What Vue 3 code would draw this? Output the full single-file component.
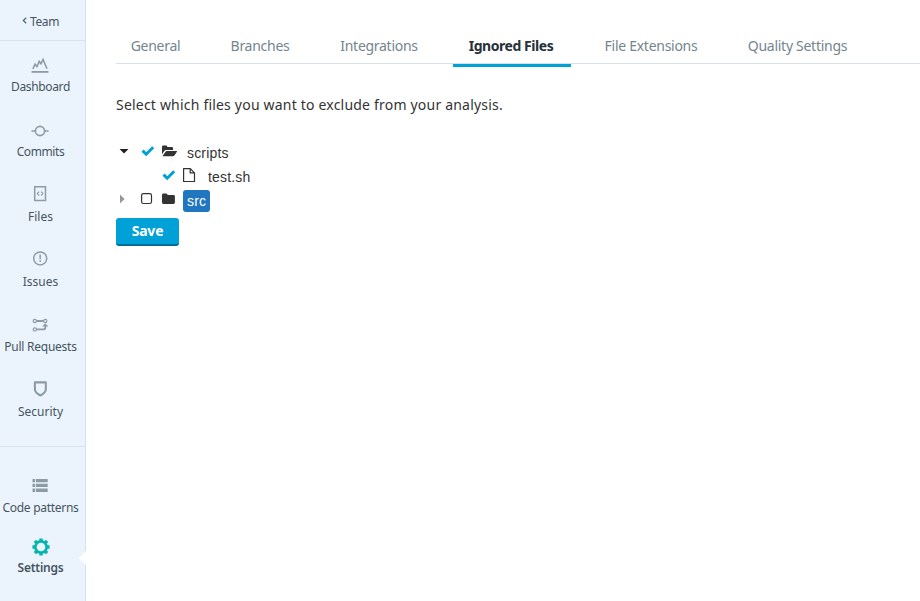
<script setup>
const mainNav = [
  { id: 'dashboard', label: 'Dashboard' },
  { id: 'commits', label: 'Commits' },
  { id: 'files', label: 'Files' },
  { id: 'issues', label: 'Issues' },
  { id: 'pulls', label: 'Pull Requests' },
  { id: 'security', label: 'Security' },
]
const tabs = ['General', 'Branches', 'Integrations', 'Ignored Files', 'File Extensions', 'Quality Settings']
</script>

<template>
  <div class="app">
    <aside class="sidebar">
      <a class="team">
        <svg width="5" height="7" viewBox="0 0 5 7"><path d="M4.2 .7 1.3 3.5 4.2 6.3" fill="none" stroke="#53646f" stroke-width="1.2" /></svg>
        <span>Team</span>
      </a>
      <nav class="main-nav">
        <a v-for="item in mainNav" :key="item.id" class="nav-item" :class="item.id">
          <svg width="20" height="20" viewBox="0 0 20 20" fill="none" stroke="#8d9ba5">
            <g v-if="item.id === 'dashboard'">
              <path d="M1.5 16.9h17" stroke-width="1.8" />
              <path d="M2.9 13.8 5 9.2 7 11.6 9.2 6.4 11 8.8 13 4.4 17 13.8" stroke-width="1.6" />
            </g>
            <g v-else-if="item.id === 'commits'" stroke-width="1.6">
              <circle cx="10" cy="11" r="4.6" /><path d="M1.5 11h4M14.6 11h4" />
            </g>
            <g v-else-if="item.id === 'files'">
              <path d="M4.7 1.7h10.8v13.7H4.7z" stroke-width="1.5" />
              <path d="m9.2 6.6-2 2 2 2M11 6.6l2 2-2 2" stroke-width="1.1" />
            </g>
            <g v-else-if="item.id === 'issues'">
              <circle cx="10.2" cy="8.4" r="6.5" stroke-width="1.5" />
              <path d="M10.2 4.5v4.8M10.2 10.3v1.6" stroke-width="1.5" />
            </g>
            <g v-else-if="item.id === 'pulls'">
              <circle cx="4.8" cy="6" r="1.6" stroke-width="1.2" /><circle cx="15.3" cy="6" r="1.6" stroke-width="1.2" /><circle cx="4.8" cy="14.4" r="1.6" stroke-width="1.2" />
              <path d="M6.5 6h7.2M6.5 14.4h6.8q2 0 2-2v-2" stroke-width="1.8" />
              <path d="m12.2 11.4 3.1-3.2 3.1 3.2z" fill="#8d9ba5" stroke="none" />
            </g>
            <path v-else d="M4.9 2.4h10.9v7q0 3-5.4 6.1-5.5-3.1-5.5-6.1z" stroke-width="2.1" stroke-linejoin="round" />
          </svg>
          <span>{{ item.label }}</span>
        </a>
      </nav>
      <nav class="bottom-nav">
        <a class="nav-item patterns">
          <svg width="20" height="20" viewBox="0 0 20 20" fill="#8d9ba5">
            <path d="M2.5 4h2.6v3.3H2.5zM5.9 4h11.8v3.3H5.9zM2.5 8.8h2.6v3.3H2.5zM5.9 8.8h11.8v3.3H5.9zM2.5 13.6h2.6v3.3H2.5zM5.9 13.6h11.8v3.3H5.9z" />
          </svg>
          <span>Code patterns</span>
        </a>
        <a class="nav-item settings">
          <svg width="20" height="20" viewBox="0 0 20 20" fill="none" stroke="#05b5ae">
            <circle cx="11" cy="10" r="5.6" stroke-width="2.6" />
            <path d="M11 1.4v2.8M11 15.8v2.8M2.4 10h2.8M16.8 10h2.8M4.9 3.9 7 6M15 14l2.1 2.1M17.1 3.9 15 6M7 14l-2.1 2.1" stroke-width="3.4" />
          </svg>
          <span>Settings</span>
          <i class="notch"></i>
        </a>
      </nav>
    </aside>

    <main class="content">
      <nav class="tabs">
        <a v-for="tab in tabs" :key="tab" class="tab" :class="{ active: tab === 'Ignored Files' }">{{ tab }}</a>
      </nav>
      <p class="intro">Select which files you want to exclude from your analysis.</p>

      <div class="tree">
        <div class="row">
          <svg class="caret" width="16" height="24" viewBox="0 0 16 24"><path d="M3.6 9.9h8.9L8 14.4z" fill="#222" /></svg>
          <svg class="mark" width="16" height="24" viewBox="0 0 16 24"><path d="m2.5 11.7 3.7 3.5 7-6.9" fill="none" stroke="#00a1d6" stroke-width="3" /></svg>
          <svg class="icon" width="18" height="24" viewBox="0 0 18 24">
            <path d="M2 15.3V7.7q0-1.2 1.2-1.2h2.9q1.2 0 1.2 1.2v.4h4.6q1.2 0 1.2 1.2V11H6.1q-1.1 0-1.8.9zM2.4 17.2l3-4.3q.5-.9 1.6-.9h9.6q.8 0 .3.8l-2.5 3.6q-.5.8-1.6.8z" fill="#333" />
          </svg>
          <span class="name">scripts</span>
        </div>
        <div class="row child">
          <svg class="mark" width="16" height="24" viewBox="0 0 16 24"><path d="m2.5 11.7 3.7 3.5 7-6.9" fill="none" stroke="#00a1d6" stroke-width="3" /></svg>
          <svg class="icon" width="18" height="24" viewBox="0 0 18 24"><path d="M2.6 5.6h6.7l4.2 4.2v8.7H2.6zM9.2 5.6v4.3h4.2" fill="none" stroke="#333" stroke-width="1.2" stroke-linejoin="round" /></svg>
          <span class="name">test.sh</span>
        </div>
        <div class="row">
          <svg class="caret" width="16" height="24" viewBox="0 0 16 24"><path d="M4 7.6v8.8l4.6-4.4z" fill="#999" /></svg>
          <svg class="mark" width="16" height="24" viewBox="0 0 16 24"><rect x="1.6" y="6.6" width="9.9" height="9.9" rx="1.8" fill="none" stroke="#333" stroke-width="1.2" /></svg>
          <svg class="icon" width="18" height="24" viewBox="0 0 18 24"><path d="M2 8q0-1.4 1.4-1.4h2.8q1.4 0 1.4 1.5h5.9q1.4 0 1.4 1.4v6q0 1.4-1.4 1.4H3.4Q2 16.9 2 15.5z" fill="#333" /></svg>
          <span class="name selected">src</span>
        </div>
      </div>
      <button class="save">Save</button>
    </main>
  </div>
</template>

<style>
body { background: #fff; }
</style>

<style scoped>
.app { display: flex; height: 601px; overflow: hidden; font-family: "Noto Sans", sans-serif; }
.sidebar { width: 86px; box-sizing: border-box; flex: none; background: #ebf4fd; border-right: 1px solid #d5e3ec; color: #46545e; font-size: 12px; }
.team { box-sizing: content-box; height: 40px; display: flex; align-items: center; justify-content: center; gap: 3px; border-bottom: 1px solid #d5e3ec; padding-right: 4px; letter-spacing: -.35px; }
.team svg { margin-top: 1px; }
.team span { padding-top: 2px; }
.main-nav { height: 391px; padding-top: 14px; border-bottom: 1px solid #d5e3ec; }
.nav-item { display: flex; flex-direction: column; align-items: center; height: 65px; padding-right: 5px; position: relative; white-space: nowrap; }
.nav-item svg { flex: none; }
.nav-item span { line-height: 16px; margin-top: 4px; padding-left: 1px; }
.dashboard span { letter-spacing: -.35px; }
.commits span { letter-spacing: -.4px; }
.pulls span { letter-spacing: -.25px; }
.bottom-nav { padding-top: 28px; }
.bottom-nav .nav-item { height: 62px; }
.bottom-nav .patterns span { margin-top: 5px; letter-spacing: -.28px; }
.bottom-nav .settings span { margin-top: 3px; font-weight: 600; letter-spacing: -.25px; }
.notch { position: absolute; right: -1px; top: 14px; border: solid transparent; border-width: 7px 7px 7px 0; border-right-color: #fff; }
.content { flex: 1; min-width: 0; padding: 30px 0 0 30px; }
.tabs { display: grid; grid-template-columns: 79px 90px 108px 118px 120px 131px; column-gap: 20px; height: 33px; border-bottom: 1px solid #d8e2e9; }
.tab { height: 37px; box-sizing: border-box; line-height: 32px; text-align: center; white-space: nowrap; color: #74858e; font-size: 14px; letter-spacing: -.28px; }
.tab:last-child { padding-left: 2px; }
.tab.active { color: #26313a; font-weight: 700; border-bottom: 3px solid #00a1d6; letter-spacing: -.45px; padding-right: 2px; }
.intro { margin: 31px 0 0; line-height: 20px; font-size: 14px; color: #333; letter-spacing: .2px; }
.tree { margin-top: 24px; font-family: "Liberation Sans", Arial, sans-serif; font-size: 14px; letter-spacing: .18px; color: #333; }
.row { height: 24px; display: flex; align-items: center; }
.row .mark { margin-left: 8px; }
.row .icon { margin-left: 4px; }
.child { padding-left: 37px; }
.name { margin-left: 5px; padding: 0 4px; line-height: 22px; margin-top: 4px; }
.selected { width: 19px; background: #2076bf; color: #fff; border-radius: 3px; }
.save { display: block; width: 63px; height: 28px; margin-top: 7px; padding: 0 0 2px; border: 0; border-bottom: 2px solid #006c99; border-radius: 3px; background: #00a1d6; color: #fff; font: 700 14px "Noto Sans", sans-serif; letter-spacing: -.2px; }
</style>
